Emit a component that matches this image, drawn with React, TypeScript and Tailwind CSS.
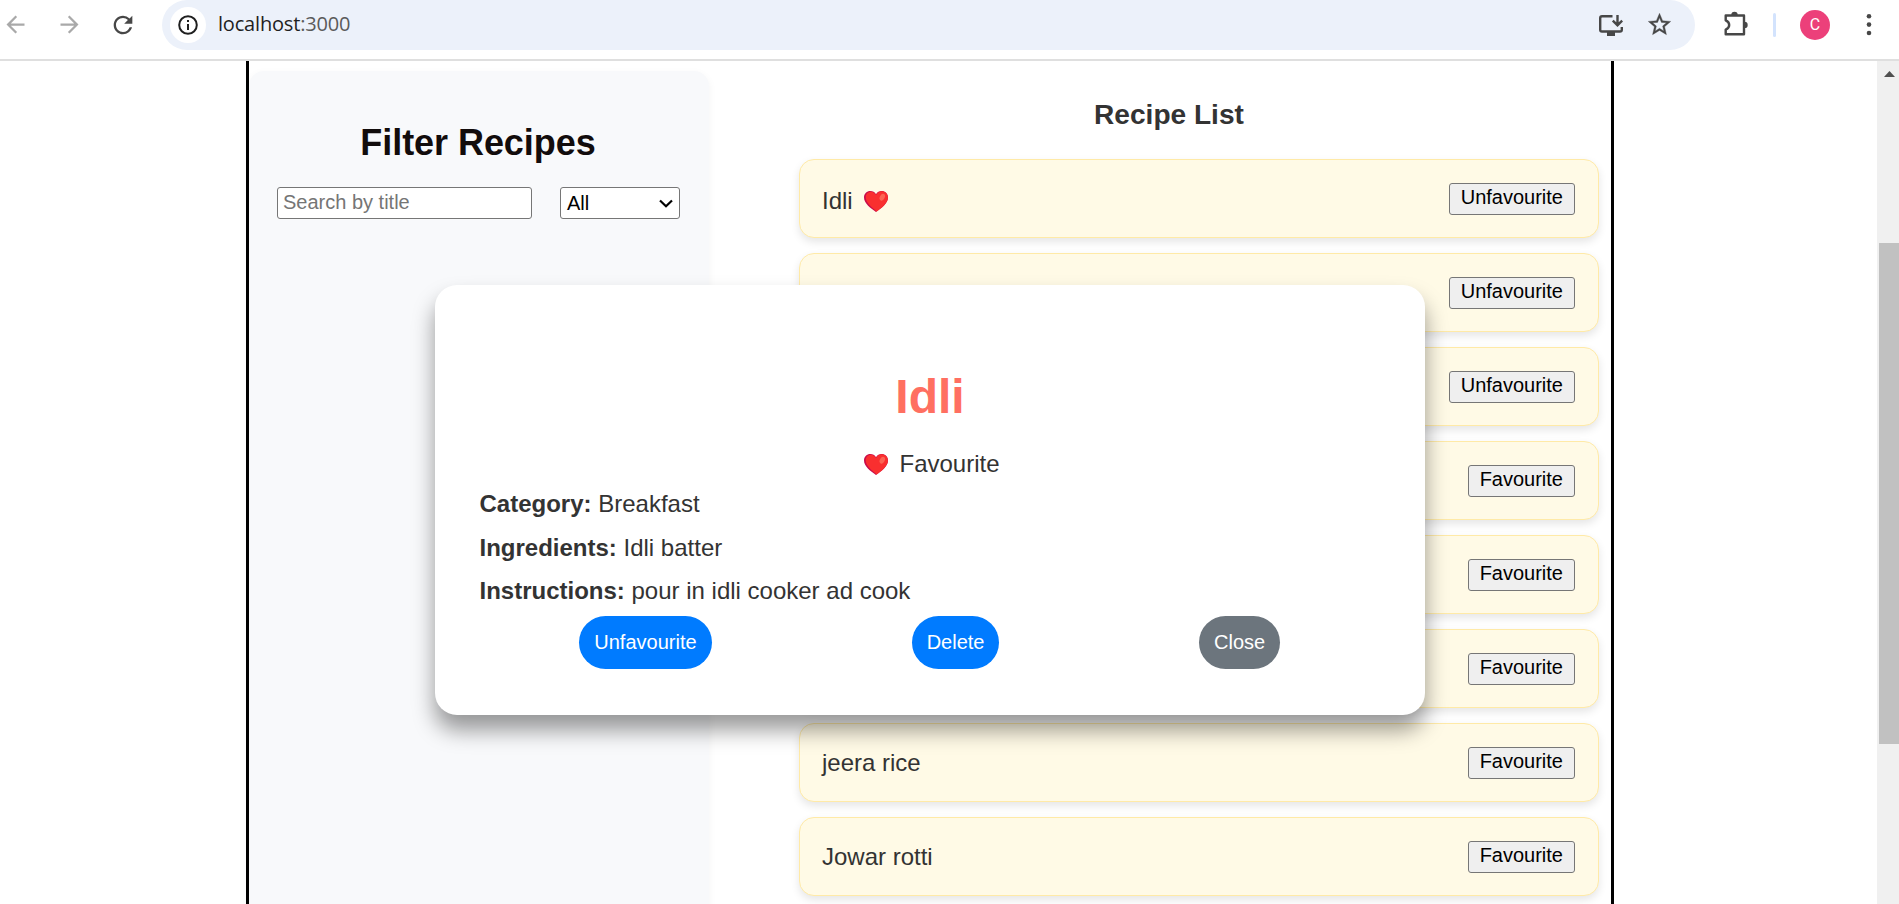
import React from "react";
import { MdArrowBack, MdArrowForward, MdRefresh } from "react-icons/md";

interface Recipe {
  title: string;
  favourite: boolean;
}

const recipes: Recipe[] = [
  { title: "Idli", favourite: true },
  { title: "", favourite: true },
  { title: "", favourite: true },
  { title: "", favourite: false },
  { title: "", favourite: false },
  { title: "", favourite: false },
  { title: "jeera rice", favourite: false },
  { title: "Jowar rotti", favourite: false },
];

const details = [
  { label: "Category:", value: "Breakfast" },
  { label: "Ingredients:", value: "Idli batter" },
  { label: "Instructions:", value: "pour in idli cooker ad cook" },
];

function Heart() {
  return (
    <svg className="h-[21px] w-6 shrink-0" viewBox="0 0 24 21">
      <path d="M12 21C7 17.500 0 12.500 0 6.500C0 2.500 3 0 6.300 0C8.700 0 10.800 1.200 12 3.200C13.200 1.200 15.300 0 17.700 0C21 0 24 2.500 24 6.500C24 12.500 17 17.500 12 21Z" fill="#ca0b4a" />
      <path d="M12.700 20.500C8.500 17 1.700 12 1.700 6.300C1.700 3 4 .7 6.900 .7C9.200 .7 11 2 12.100 4C13.200 1.500 15.300 .2 17.700 .2C21 .2 23.900 2.600 23.900 6.500C23.900 12.300 17 17.200 12.700 20.500Z" fill="#f92f2f" />
      <ellipse cx="18.300" cy="6.200" rx="2.400" ry="3.600" transform="rotate(28 18.300 6.200)" fill="#fc6454" />
    </svg>
  );
}

function BrowserBar() {
  return (
    <header className="flex h-[61px] shrink-0 items-start border-b-2 border-[#dfdfdf] bg-white">
      <div className="flex h-[49px] w-[162px] shrink-0 items-center">
        <MdArrowBack className="ml-[2px] size-[27px] text-[#a9a9a9]" />
        <MdArrowForward className="ml-[27px] size-[27px] text-[#a9a9a9]" />
        <MdRefresh className="ml-[26px] size-[28px] text-[#474747]" />
      </div>
      <div className="flex h-[50px] w-[1533px] shrink-0 items-center rounded-[25px] bg-[#ecf1fa] pl-2">
        <span className="flex size-9 items-center justify-center rounded-full bg-white">
          <svg className="size-5" viewBox="0 0 20 20" fill="none" stroke="#1f1f1f" strokeWidth="2">
            <circle cx="10" cy="10" r="8.800" />
            <path d="M10 9v6M10 5v2" />
          </svg>
        </span>
        <span className="ml-3 pb-[2px] font-['Open_Sans',sans-serif] text-[20px] leading-[48px] tracking-[-0.180px] text-[#1f1f1f]">
          localhost<span className="text-[#5a5a5a]">:3000</span>
        </span>
        <span className="flex-1" />
        <svg className="mr-[23px] h-[21px] w-6" viewBox="0 0 24 21" fill="none" stroke="#474747" strokeWidth="2.400">
          <path d="M13.500 1.200H3Q1.200 1.200 1.200 3V14.700Q1.200 16.500 3 16.500H21Q22.800 16.500 22.800 14.700V12" />
          <path d="M18.500 0V10M13.800 5.600L18.500 10.200L23.200 5.600" />
          <path d="M8 17H16V21H8Z" fill="#474747" stroke="none" />
        </svg>
        <svg className="mr-[22px] mb-[2px] size-[27px]" viewBox="0 0 24 24" fill="#474747" stroke="#474747" strokeWidth="0.300">
          <path d="m22 9.240-7.190-.62L12 2 9.190 8.630 2 9.240l5.460 4.730L5.820 21 12 17.270 18.180 21l-1.630-7.030L22 9.240zM12 15.400l-3.760 2.270 1-4.280-3.320-2.880 4.380-.38L12 6.100l1.710 4.040 4.380.38-3.320 2.880 1 4.280L12 15.400z" />
        </svg>
      </div>
      <div className="flex h-[50px] flex-1 items-center">
        <svg className="ml-[29px] h-[25px] w-6 -translate-y-[2px]" viewBox="0 0 24 25" fill="none">
          <path d="M1.700 4.500H20V23.300H1.700V18.500Q5.200 17 5.200 13.900Q5.200 10.800 1.700 9.300Z" stroke="#474747" strokeWidth="2.400" strokeLinejoin="round" />
          <path d="M7.300 4A3.200 3.200 0 0 1 13.700 4ZM20.500 10.700A3.200 3.200 0 0 1 20.500 17.100Z" fill="#474747" />
        </svg>
        <span className="ml-[25px] h-6 w-[3px] rounded-full bg-[#d3e3fd]" />
        <span className="ml-6 flex size-[30px] items-center justify-center rounded-full bg-[#ec407a] font-['Roboto',sans-serif] text-[16px] leading-none text-white">C</span>
        <svg className="ml-9 h-6 w-[6px]" viewBox="0 0 6 24" fill="#474747">
          <circle cx="3" cy="3.200" r="2.300" />
          <circle cx="3" cy="11.600" r="2.300" />
          <circle cx="3" cy="20" r="2.300" />
        </svg>
      </div>
    </header>
  );
}

function FilterPanel() {
  return (
    <aside className="mt-[10px] h-[900px] w-[460px] shrink-0 rounded-[15px] bg-[#f8f9fb] px-7 shadow-[0_3px_9px_rgba(0,0,0,0.05)]">
      <h2 className="mt-[51px] pr-[2px] text-center text-[36px] leading-[41px] font-bold tracking-[-0.060px] text-[#120c0c]">Filter Recipes</h2>
      <div className="mt-6 flex gap-7">
        <input
          className="h-8 w-[255px] rounded-[3px] border border-[#767676] bg-white pr-1 pb-[2px] pl-[5px] text-[20px] leading-[23px] placeholder:text-[#757575]"
          placeholder="Search by title"
        />
        <button className="flex h-8 w-[120px] items-center justify-between rounded-[3px] border border-[#767676] bg-white pr-[6px] pl-[6px] text-[20px] leading-[30px] text-black">
          All
          <svg className="h-[9px] w-[14px]" viewBox="0 0 14 9" fill="none" stroke="#000" strokeWidth="2.200">
            <path d="M1 1.500L7 7.300L13 1.500" />
          </svg>
        </button>
      </div>
    </aside>
  );
}

function RecipeCard({ recipe }: { recipe: Recipe }) {
  return (
    <li className="flex h-[79px] items-start justify-between rounded-[15px] border border-[#ffeaa7] bg-[#fffae6] pr-[23px] pl-[22px] shadow-[0_4px_9px_rgba(0,0,0,0.1)]">
      {recipe.title === "Idli" ? (
        <span className="mt-[27px] flex items-center gap-[11px] text-[24px] leading-[28px] text-[#333]">
          {recipe.title}
          <Heart />
        </span>
      ) : (
        <span className="mt-[25px] text-[24px] leading-[28px] text-[#333]">{recipe.title}</span>
      )}
      <button className="mt-[23px] h-8 rounded-[3px] border border-[#767676] bg-[#efefef] px-[11px] pb-[3px] text-[20px] leading-[27px] text-black">
        {recipe.favourite ? "Unfavourite" : "Favourite"}
      </button>
    </li>
  );
}

function RecipeDialog() {
  return (
    <div
      role="dialog"
      className="absolute top-[224px] left-[435px] flex h-[430px] w-[990px] flex-col rounded-[22px] bg-white px-[45px] text-[24px] text-[#333] shadow-[0_15px_22px_rgba(0,0,0,0.4)]"
    >
      <h2 className="mt-[85px] text-center text-[48px] leading-[54px] font-bold text-[#ff6f61]">Idli</h2>
      <p className="mt-[26px] flex h-7 items-center justify-center gap-[11px] pl-1 leading-7"><Heart />Favourite</p>
      <dl className="mt-3 -ml-[0.500px]">
        {details.map((d) => (
          <div key={d.label} className="mb-[15.500px] leading-7">
            <dt className="inline font-bold">{d.label}</dt> <dd className="inline">{d.value}</dd>
          </div>
        ))}
      </dl>
      <div className="-mt-[5px] -ml-[1px] flex justify-around text-[20px] leading-[23px] text-white">
        <button className="h-[53px] rounded-[30px] bg-[#007bff] px-[15.500px]">Unfavourite</button>
        <button className="h-[53px] rounded-[30px] bg-[#007bff] px-[15px]">Delete</button>
        <button className="h-[53px] rounded-[30px] bg-[#6c757d] px-[15px]">Close</button>
      </div>
    </div>
  );
}

export default function App() {
  return (
    <div className="flex h-[904px] w-[1899px] flex-col overflow-hidden bg-white font-['Liberation_Sans',Arial,sans-serif]">
      <BrowserBar />
      <div className="relative flex h-[843px] overflow-hidden">
        <main className="ml-[246px] flex w-[1368px] shrink-0 border-x-[3px] border-black">
          <FilterPanel />
          <section className="ml-[18px] flex-1">
            <h3 className="mt-[37px] text-center text-[28.080px] leading-[33px] font-bold text-[#333]">Recipe List</h3>
            <ul className="mt-7 flex flex-col gap-[15px] pr-3 pl-[72px]">
              {recipes.map((recipe, i) => (
                <RecipeCard key={i} recipe={recipe} />
              ))}
            </ul>
          </section>
        </main>
        <RecipeDialog />
        <div className="ml-auto flex w-[22px] shrink-0 flex-col bg-[#f0f0f0] pl-[2px]">
          <svg className="mt-[10px] ml-[5px] h-[6px] w-[11px]" viewBox="0 0 11 6" fill="#505050">
            <path d="M5.500 0L11 6H0Z" />
          </svg>
          <div className="mt-[166px] h-[501px] bg-[#c1c1c1]" />
        </div>
      </div>
    </div>
  );
}
